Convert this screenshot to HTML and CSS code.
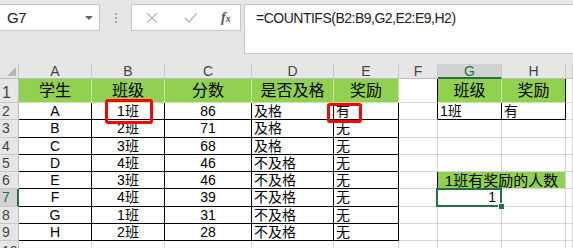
FILE: index.html
```html
<!DOCTYPE html>
<html>
<head>
<meta charset="utf-8">
<link rel="stylesheet" href="styles.css">
</head>
<body>
<div class="toolbar">
  <div class="namebox"><span class="nb-text">G7</span><span class="nb-arrow"></span></div>
  <div class="dots"><i></i><i></i><i></i></div>
  <div class="fxbox">
    <svg class="ico" width="14" height="14" viewBox="0 0 14 14"><path d="M2 2 L12 12 M12 2 L2 12" stroke="#c2c2c2" stroke-width="1.6" fill="none"/></svg>
    <svg class="ico" width="16" height="14" viewBox="0 0 16 14"><path d="M2 7 L6 11 L14 2" stroke="#c2c2c2" stroke-width="1.8" fill="none"/></svg>
    <span class="fx">f<sub>x</sub></span>
  </div>
  <div class="formula">=COUNTIFS(B2:B9,G2,E2:E9,H2)</div>
</div>
<div class="sheet">
  <div class="grid">
    <div class="h corner"><span class="tri"></span></div>
    <div class="h">A</div><div class="h">B</div><div class="h">C</div><div class="h">D</div><div class="h">E</div><div class="h">F</div><div class="h hsel">G</div><div class="h">H</div><div class="h"></div>

    <div class="rh big">1</div>
    <div class="c g ctr big">学生</div><div class="c g ctr big">班级</div><div class="c g ctr big">分数</div><div class="c g ctr big">是否及格</div><div class="c g ctr big">奖励</div><div class="c rb"></div><div class="c g ctr big">班级</div><div class="c g ctr big rb">奖励</div><div class="c"></div>

    <div class="rh">2</div>
    <div class="c k ctr">A</div><div class="c k ctr">1班</div><div class="c k ctr">86</div><div class="c k">及格</div><div class="c k">有</div><div class="c rb"></div><div class="c k">1班</div><div class="c k">有</div><div class="c"></div>

    <div class="rh">3</div>
    <div class="c k ctr">B</div><div class="c k ctr">2班</div><div class="c k ctr">71</div><div class="c k">及格</div><div class="c k">无</div><div class="c"></div><div class="c"></div><div class="c"></div><div class="c"></div>

    <div class="rh">4</div>
    <div class="c k ctr">C</div><div class="c k ctr">3班</div><div class="c k ctr">68</div><div class="c k">及格</div><div class="c k">无</div><div class="c"></div><div class="c"></div><div class="c"></div><div class="c"></div>

    <div class="rh">5</div>
    <div class="c k ctr">D</div><div class="c k ctr">4班</div><div class="c k ctr">46</div><div class="c k">不及格</div><div class="c k">无</div><div class="c"></div><div class="c"></div><div class="c"></div><div class="c"></div>

    <div class="rh">6</div>
    <div class="c k ctr">E</div><div class="c k ctr">3班</div><div class="c k ctr">46</div><div class="c k">不及格</div><div class="c k">无</div><div class="c rb"></div><div class="c g ctr merge">1班有奖励的人数</div><div class="c"></div>

    <div class="rh rsel">7</div>
    <div class="c k ctr">F</div><div class="c k ctr">4班</div><div class="c k ctr">39</div><div class="c k">不及格</div><div class="c k">无</div><div class="c"></div><div class="c right sel">1</div><div class="c"></div><div class="c"></div>

    <div class="rh">8</div>
    <div class="c k ctr">G</div><div class="c k ctr">1班</div><div class="c k ctr">31</div><div class="c k">不及格</div><div class="c k">无</div><div class="c"></div><div class="c"></div><div class="c"></div><div class="c"></div>

    <div class="rh">9</div>
    <div class="c k ctr">H</div><div class="c k ctr">2班</div><div class="c k ctr">28</div><div class="c k">不及格</div><div class="c k">无</div><div class="c"></div><div class="c"></div><div class="c"></div><div class="c"></div>

    <div class="rh">10</div>
    <div class="c"></div><div class="c"></div><div class="c"></div><div class="c"></div><div class="c"></div><div class="c"></div><div class="c"></div><div class="c"></div><div class="c"></div>
  </div>
  <div class="mark mark-b"></div>
  <div class="mark mark-e"></div>
</div>
</body>
</html>
```

FILE: styles.css
```css
html, body {
  margin: 0;
  padding: 0;
  background: #ffffff;
  overflow: hidden;
}
body {
  font-family: "Liberation Sans", "Noto Sans CJK SC", sans-serif;
  color: #000;
}
.toolbar {
  height: 64px;
  background: #e6e6e6;
  display: flex;
  align-items: flex-start;
  padding-top: 4px;
  box-sizing: border-box;
}
.namebox {
  width: 100px;
  height: 27px;
  background: #fff;
  border: 1px solid #c6c6c6;
  border-left: none;
  box-sizing: border-box;
  display: flex;
  align-items: center;
  justify-content: space-between;
  padding: 0 6px 0 7px;
  font-size: 15px;
  letter-spacing: -0.3px;
  color: #222;
}
.nb-arrow {
  width: 0;
  height: 0;
  border-left: 4px solid transparent;
  border-right: 4px solid transparent;
  border-top: 4px solid #666;
}
.dots {
  width: 31px;
  height: 27px;
  display: flex;
  flex-direction: column;
  align-items: center;
  justify-content: center;
  gap: 2px;
}
.dots i {
  width: 2px;
  height: 2px;
  background: #a6a6a6;
}
.fxbox {
  width: 110px;
  height: 27px;
  background: #fff;
  border: 1px solid #c6c6c6;
  box-sizing: border-box;
  display: flex;
  align-items: center;
  padding: 0 8px 0 13px;
  gap: 24px;
}
.fx {
  font-family: "Liberation Serif", serif;
  font-style: italic;
  font-weight: bold;
  font-size: 14px;
  color: #555;
  margin-left: -2px;
}
.fx sub {
  font-size: 10px;
  vertical-align: 0;
}
.formula {
  flex: 1;
  margin-left: 3px;
  height: 50px;
  background: #fff;
  border: 1px solid #c6c6c6;
  border-right: none;
  box-sizing: border-box;
  padding: 5px 0 0 11px;
  font-size: 14px;
  letter-spacing: -0.5px;
  color: #222;
  white-space: nowrap;
}
.sheet {
  position: relative;
}
.grid {
  display: grid;
  grid-template-columns: 19px 73px 73px 87px 82px 65px 39px 64px 64px 1fr;
  grid-template-rows: 15px 24px repeat(8, 17.25px) 20px;
}
.h {
  background: #e6e6e6;
  border-right: 1px solid #c8c8c8;
  border-bottom: 1px solid #bdbdbd;
  box-sizing: border-box;
  font-size: 14px;
  color: #444;
  display: flex;
  align-items: center;
  justify-content: center;
  line-height: 1;
}
.corner {
  position: relative;
}
.tri {
  position: absolute;
  right: 2px;
  bottom: 2px;
  width: 0;
  height: 0;
  border-left: 9px solid transparent;
  border-bottom: 9px solid #b5b5b5;
}
.hsel {
  background: #d2d2d2;
  border-bottom: 2px solid #217346;
  color: #217346;
}
.rh {
  background: #e6e6e6;
  border-right: 1px solid #bdbdbd;
  border-bottom: 1px solid #c8c8c8;
  box-sizing: border-box;
  font-size: 14px;
  color: #444;
  display: flex;
  align-items: center;
  padding-left: 2px;
  line-height: 1;
}
.rh.big {
  padding-top: 4px;
}
.rsel {
  background: #d2d2d2;
  border-right: 2px solid #217346;
  color: #217346;
}
.c {
  border-right: 1px solid #d4d4d4;
  border-bottom: 1px solid #d4d4d4;
  box-sizing: border-box;
  display: flex;
  align-items: center;
  font-size: 14px;
  white-space: nowrap;
  overflow: hidden;
  padding: 0 2px;
  line-height: 1;
}
.ctr {
  justify-content: center;
}
.right {
  justify-content: flex-end;
  padding-right: 5px;
}
.big {
  font-size: 16px;
}
.g {
  background: #92d050;
  border-right-color: #c9e6a8;
  border-bottom-color: #c9e6a8;
}
.k {
  border-right-color: #000;
  border-bottom-color: #000;
}
.rb {
  border-right-color: #000;
}
.merge {
  grid-column: span 2;
  font-size: 15px;
  border-right-color: #d4d4d4;
  border-bottom-color: #d4d4d4;
}
.sel {
  position: relative;
  overflow: visible;
}
.sel::after {
  content: "";
  position: absolute;
  left: -2px;
  top: -1px;
  right: -1px;
  bottom: -1px;
  border: 2px solid #217346;
}
.sel::before {
  content: "";
  position: absolute;
  right: -4px;
  bottom: -4px;
  width: 5px;
  height: 5px;
  background: #217346;
  border: 1px solid #fff;
  z-index: 2;
}
.mark {
  position: absolute;
  border: 3px solid #ff0000;
  border-radius: 3px;
  box-sizing: border-box;
}
.mark-b {
  left: 105px;
  top: 35px;
  width: 48px;
  height: 25px;
}
.mark-e {
  left: 327px;
  top: 39px;
  width: 35px;
  height: 20px;
}
```
